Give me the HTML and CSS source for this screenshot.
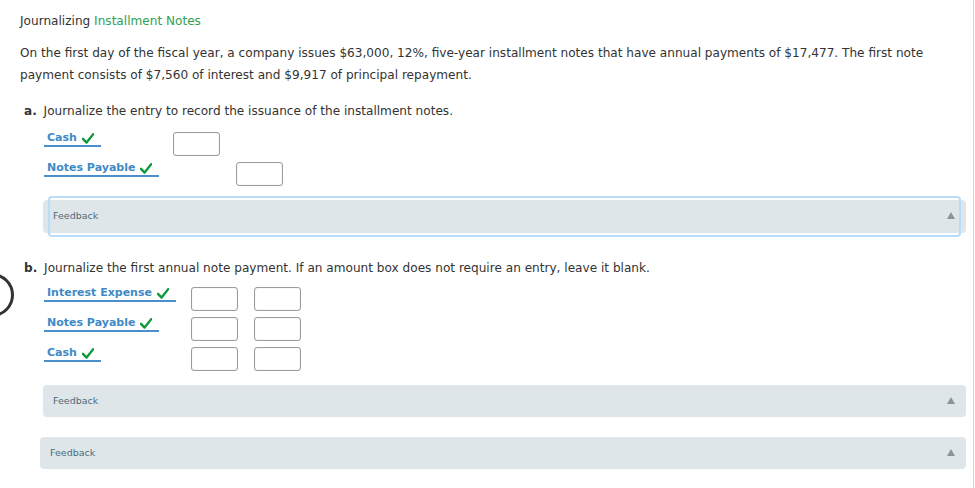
FILE: index.html
```html
<!DOCTYPE html>
<html>
<head>
    <meta charset="utf-8">
    <link rel="stylesheet" href="styles.css">
    <title>Journalizing Installment Notes</title>
</head>
<body>
    <div class="sheet">
        <span class="ring"></span>
        <h1 class="title">Journalizing <span class="topic">Installment Notes</span></h1>
        <p class="intro">On the first day of the fiscal year, a company issues $63,000, 12%, five-year installment notes that have annual payments of $17,477. The first note payment consists of $7,560 of interest and $9,917 of principal repayment.</p>

        <div class="part">
            <p class="prompt"><b>a.</b> Journalize the entry to record the issuance of the installment notes.</p>
            <div class="entries">
                <span class="account">Cash <svg class="check" viewBox="0 0 12 11"><path d="M1 5.8 L4.6 9.6 L11.2 1.2"/></svg></span>
                <input class="amount" type="text">
                <span></span>

                <span class="account">Notes Payable <svg class="check" viewBox="0 0 12 11"><path d="M1 5.8 L4.6 9.6 L11.2 1.2"/></svg></span>
                <span></span>
                <input class="amount" type="text">
            </div>
            <div class="feedback focused">Feedback<span class="arrow"></span></div>
        </div>

        <div class="part">
            <p class="prompt"><b>b.</b> Journalize the first annual note payment. If an amount box does not require an entry, leave it blank.</p>
            <div class="entries wide">
                <span class="account">Interest Expense <svg class="check" viewBox="0 0 12 11"><path d="M1 5.8 L4.6 9.6 L11.2 1.2"/></svg></span>
                <input class="amount" type="text">
                <input class="amount" type="text">

                <span class="account">Notes Payable <svg class="check" viewBox="0 0 12 11"><path d="M1 5.8 L4.6 9.6 L11.2 1.2"/></svg></span>
                <input class="amount" type="text">
                <input class="amount" type="text">

                <span class="account">Cash <svg class="check" viewBox="0 0 12 11"><path d="M1 5.8 L4.6 9.6 L11.2 1.2"/></svg></span>
                <input class="amount" type="text">
                <input class="amount" type="text">
            </div>
            <div class="feedback">Feedback<span class="arrow"></span></div>
        </div>

        <div class="feedback general">Feedback<span class="arrow"></span></div>
    </div>
</body>
</html>
```

FILE: styles.css
```css
body {
    font-family: "DejaVu Sans", Verdana, sans-serif;
    font-size: 12.1px;
    color: #333;
    margin: 0;
    padding: 0;
}

.sheet {
    position: relative;
    width: 974px;
    min-height: 488px;
    box-sizing: border-box;
    border-right: 1px solid #d4d4d4;
    padding: 13px 0 0 20px;
    overflow: hidden;
}

.ring {
    position: absolute;
    left: -30px;
    top: 273px;
    width: 38px;
    height: 38px;
    border: 3px solid #333;
    border-radius: 50%;
}

.title {
    font-size: 12.1px;
    font-weight: normal;
    margin: 0;
    line-height: 16px;
}

.topic {
    color: #2fa14f;
}

.intro {
    margin: 13px 0 0 0;
    line-height: 22px;
    width: 925px;
}

.part {
    margin-top: 17px;
}

.part + .part {
    margin-top: 27px;
}

.prompt {
    margin: 0 0 0 4px;
    line-height: 16px;
}

.prompt b {
    margin-right: 3px;
}

.entries {
    display: grid;
    grid-template-columns: 113px 47px 47px;
    column-gap: 16px;
    row-gap: 6px;
    margin: 13px 0 0 24px;
}

.entries.wide {
    grid-template-columns: 131px 47px 47px;
    margin-top: 11px;
}

.account {
    justify-self: start;
    align-self: start;
    color: #3f8ac6;
    font-size: 11px;
    font-weight: bold;
    padding: 0 7px 0 3px;
    border-bottom: 2px solid #4a8fca;
    line-height: 14px;
    margin-top: -1px;
    white-space: nowrap;
}

.check {
    width: 12px;
    height: 11px;
    vertical-align: -3px;
    margin-left: 1px;
}

.check path {
    fill: none;
    stroke: #0d9a3c;
    stroke-width: 2.4;
    stroke-linecap: round;
    stroke-linejoin: round;
}

.amount {
    width: 47px;
    height: 24px;
    box-sizing: border-box;
    border: 1px solid #9c9c9c;
    border-radius: 3px;
    box-shadow: inset 0 0 1px #bbb;
    margin: 0;
    padding: 0;
}

.feedback {
    position: relative;
    margin: 14px 0 0 23px;
    width: 923px;
    height: 32px;
    box-sizing: border-box;
    background-color: #dfe6e9;
    border-radius: 4px;
    padding: 10px 0 0 10px;
    font-size: 9.5px;
    color: #4d6b78;
    line-height: 12px;
}

.feedback.focused {
    margin-top: 14px;
    height: 33px;
}

.feedback.focused::after {
    content: "";
    position: absolute;
    left: 5px;
    right: 5px;
    top: -4px;
    bottom: -4px;
    border: 2px solid #b9dcf8;
    border-radius: 4px;
}

.feedback.general {
    margin: 20px 0 0 20px;
    width: 926px;
}

.arrow {
    position: absolute;
    right: 11px;
    top: 12px;
    width: 0;
    height: 0;
    border-left: 4px solid transparent;
    border-right: 4px solid transparent;
    border-bottom: 7px solid #8c9498;
}
```
